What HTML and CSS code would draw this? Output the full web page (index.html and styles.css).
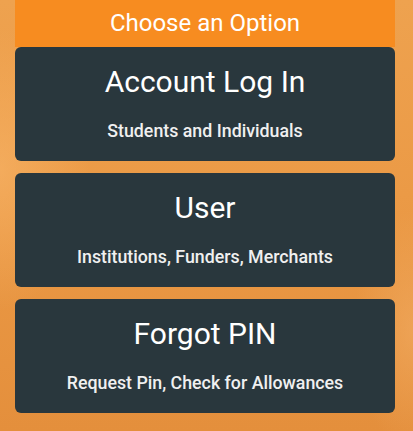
FILE: index.html
```html
<!DOCTYPE html>
<html lang="en">
<head>
<meta charset="utf-8">
<title>Choose an Option</title>
<link rel="stylesheet" href="styles.css">
</head>
<body>
<main class="panel">
  <header class="panel-head">Choose an Option</header>
  <a class="option" href="#">
    <span class="option-title">Account Log In</span>
    <span class="option-sub">Students and Individuals</span>
  </a>
  <a class="option" href="#">
    <span class="option-title">User</span>
    <span class="option-sub">Institutions, Funders, Merchants</span>
  </a>
  <a class="option" href="#">
    <span class="option-title">Forgot PIN</span>
    <span class="option-sub">Request Pin, Check for Allowances</span>
  </a>
</main>
</body>
</html>
```
FILE: styles.css
```css
html, body {
  margin: 0;
  padding: 0;
}
body {
  width: 413px;
  height: 431px;
  overflow: hidden;
  font-family: Roboto, "Liberation Sans", sans-serif;
  background:
    radial-gradient(ellipse 90px 140px at 0px 170px, rgba(250, 185, 110, 0.55), rgba(250, 185, 110, 0) 100%),
    radial-gradient(ellipse 60px 120px at 413px 330px, rgba(245, 180, 110, 0.45), rgba(245, 180, 110, 0) 100%),
    linear-gradient(180deg, #eea24f 0%, #eb9a46 45%, #e48f3c 100%);
}
.panel {
  width: 380px;
  margin: 0 0 0 15px;
  display: flex;
  flex-direction: column;
  gap: 12px;
}
.panel-head {
  height: 47px;
  background: #f78c20;
  color: #fff;
  font-size: 24px;
  line-height: 47px;
  text-align: center;
  margin-bottom: -12px;
}
.option {
  height: 114px;
  box-sizing: border-box;
  background: #29373d;
  border-radius: 6px;
  color: #fff;
  text-decoration: none;
  display: flex;
  flex-direction: column;
  align-items: center;
  padding-top: 15px;
}
.option-title {
  font-size: 30px;
  line-height: 40px;
}
.option-sub {
  font-size: 17.8px;
  font-weight: 500;
  line-height: 24px;
  margin-top: 17px;
  color: #f0f0f0;
}
```
